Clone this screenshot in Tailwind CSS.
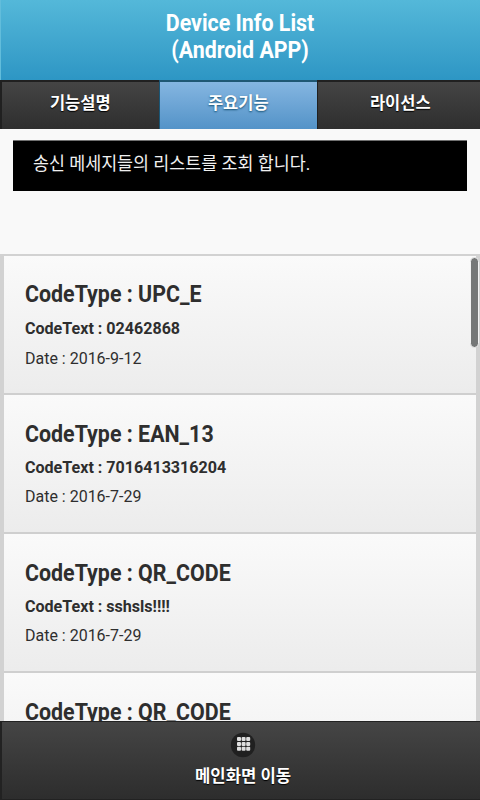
<!DOCTYPE html>
<html lang="ko">
<head>
<meta charset="utf-8">
<title>Device Info List</title>
<script src="https://cdn.jsdelivr.net/npm/@tailwindcss/browser@4"></script>
</head>
<body class="w-[480px] h-[800px] overflow-hidden bg-[#f9f9f9] font-[Roboto,'Noto_Sans_CJK_KR',sans-serif] text-[#2e2e2e]">
<div class="flex h-[800px] flex-col">
  <header class="h-20 shrink-0 border-l border-[#62bddb] bg-linear-to-b from-[#54b8d9] to-[#2d96c4] pt-[11px] text-center">
    <h1 class="scale-x-[0.93] pr-[1px] text-[23px] leading-[26.5px] font-bold text-white">Device Info List<br>(Android APP)</h1>
  </header>
  <nav class="flex h-[49px] shrink-0 text-center text-[17px] leading-[43px] font-bold text-white">
    <a class="w-[159px] border-t-2 border-l-2 border-[#202020] bg-linear-to-b from-[#454545] to-[#2e2e2e] text-shadow-[0_1px_1px_#000]"><span class="inline-block scale-x-[0.97]">기능설명</span></a>
    <a class="w-[158px] border-t-2 border-l border-t-[#1f5874] border-l-[#1b5675] bg-linear-to-b from-[#85b6e1] to-[#5393c8] text-shadow-[0_1px_2px_#145072]"><span class="inline-block scale-x-[0.97]">주요기능</span></a>
    <a class="w-[163px] border-t-2 border-l border-[#202020] bg-linear-to-b from-[#454545] to-[#2e2e2e] pl-[2px] text-shadow-[0_1px_1px_#000]"><span class="inline-block scale-x-[0.97]">라이선스</span></a>
  </nav>
  <p class="mx-[13px] mt-[11px] h-[51px] shrink-0 border-t border-[#707070] bg-black pl-5 text-[18px] leading-[45px] text-[#f0f0f0]"><span class="inline-block origin-left scale-x-[0.964]">송신 메세지들의 리스트를 조회 합니다.</span></p>
  <main class="relative mt-[63px] min-h-0 flex-1 overflow-hidden border-x-4 border-[#d2d2d2]">
    <article class="h-[139px] border-t-2 border-[#d2d2d2] bg-linear-to-b from-[#fafafa] to-[#ececec] pt-[25px] pl-[21px]">
      <h2 class="origin-left scale-x-[0.93] text-[23px] leading-7 font-bold">CodeType : UPC_E</h2>
      <h3 class="mt-[9px] origin-left scale-x-[0.945] text-[17px] leading-5 font-bold">CodeText : 02462868</h3>
      <p class="mt-[10px] origin-left scale-x-[0.94] text-[17px] leading-5">Date : 2016-9-12</p>
    </article>
    <article class="h-[139px] border-t-2 border-[#cfcfcf] bg-linear-to-b from-[#fafafa] to-[#ececec] pt-[26px] pl-[21px]">
      <h2 class="origin-left scale-x-[0.93] text-[23px] leading-7 font-bold">CodeType : EAN_13</h2>
      <h3 class="mt-[8px] origin-left scale-x-[0.945] text-[17px] leading-5 font-bold">CodeText : 7016413316204</h3>
      <p class="mt-[9px] origin-left scale-x-[0.94] text-[17px] leading-5">Date : 2016-7-29</p>
    </article>
    <article class="h-[139px] border-t-2 border-[#cfcfcf] bg-linear-to-b from-[#fafafa] to-[#ececec] pt-[26px] pl-[21px]">
      <h2 class="origin-left scale-x-[0.93] text-[23px] leading-7 font-bold">CodeType : QR_CODE</h2>
      <h3 class="mt-[8px] origin-left scale-x-[0.945] text-[17px] leading-5 font-bold">CodeText : sshsls!!!!</h3>
      <p class="mt-[9px] origin-left scale-x-[0.94] text-[17px] leading-5">Date : 2016-7-29</p>
    </article>
    <article class="h-[139px] border-t-2 border-[#cfcfcf] bg-linear-to-b from-[#fafafa] to-[#ececec] pt-[26px] pl-[21px]">
      <h2 class="origin-left scale-x-[0.93] text-[23px] leading-7 font-bold">CodeType : QR_CODE</h2>
    </article>
  </main>
  <footer class="flex h-[79px] shrink-0 flex-col items-center border-t border-l-2 border-b border-[#222] bg-linear-to-b from-[#454545] to-[#2d2d2d] pt-[10px] pl-1 text-white">
    <svg class="size-[26px]" viewBox="0 0 26 26"><circle cx="13" cy="13" r="12.2" fill="#202020"/><g fill="#dedede"><rect x="7" y="5" width="4" height="4" rx="1"/><rect x="11.6" y="5" width="4" height="4" rx="1"/><rect x="16.2" y="5" width="4" height="4" rx="1"/><rect x="7" y="9.9" width="4" height="4" rx="1"/><rect x="11.6" y="9.9" width="4" height="4" rx="1"/><rect x="16.2" y="9.9" width="4" height="4" rx="1"/><rect x="7" y="14.8" width="4" height="4" rx="1"/><rect x="11.6" y="14.8" width="4" height="4" rx="1"/><rect x="16.2" y="14.8" width="4" height="4" rx="1"/></g></svg>
    <span class="mt-[6px] scale-x-[0.98] text-[17px] leading-6 font-bold text-shadow-[0_1px_1px_#000]">메인화면 이동</span>
  </footer>
</div>
<div class="absolute top-[257px] left-[470px] h-[91px] w-[9px] rounded-full border border-[#f2f2f2] bg-[#757777]"></div>
</body>
</html>
